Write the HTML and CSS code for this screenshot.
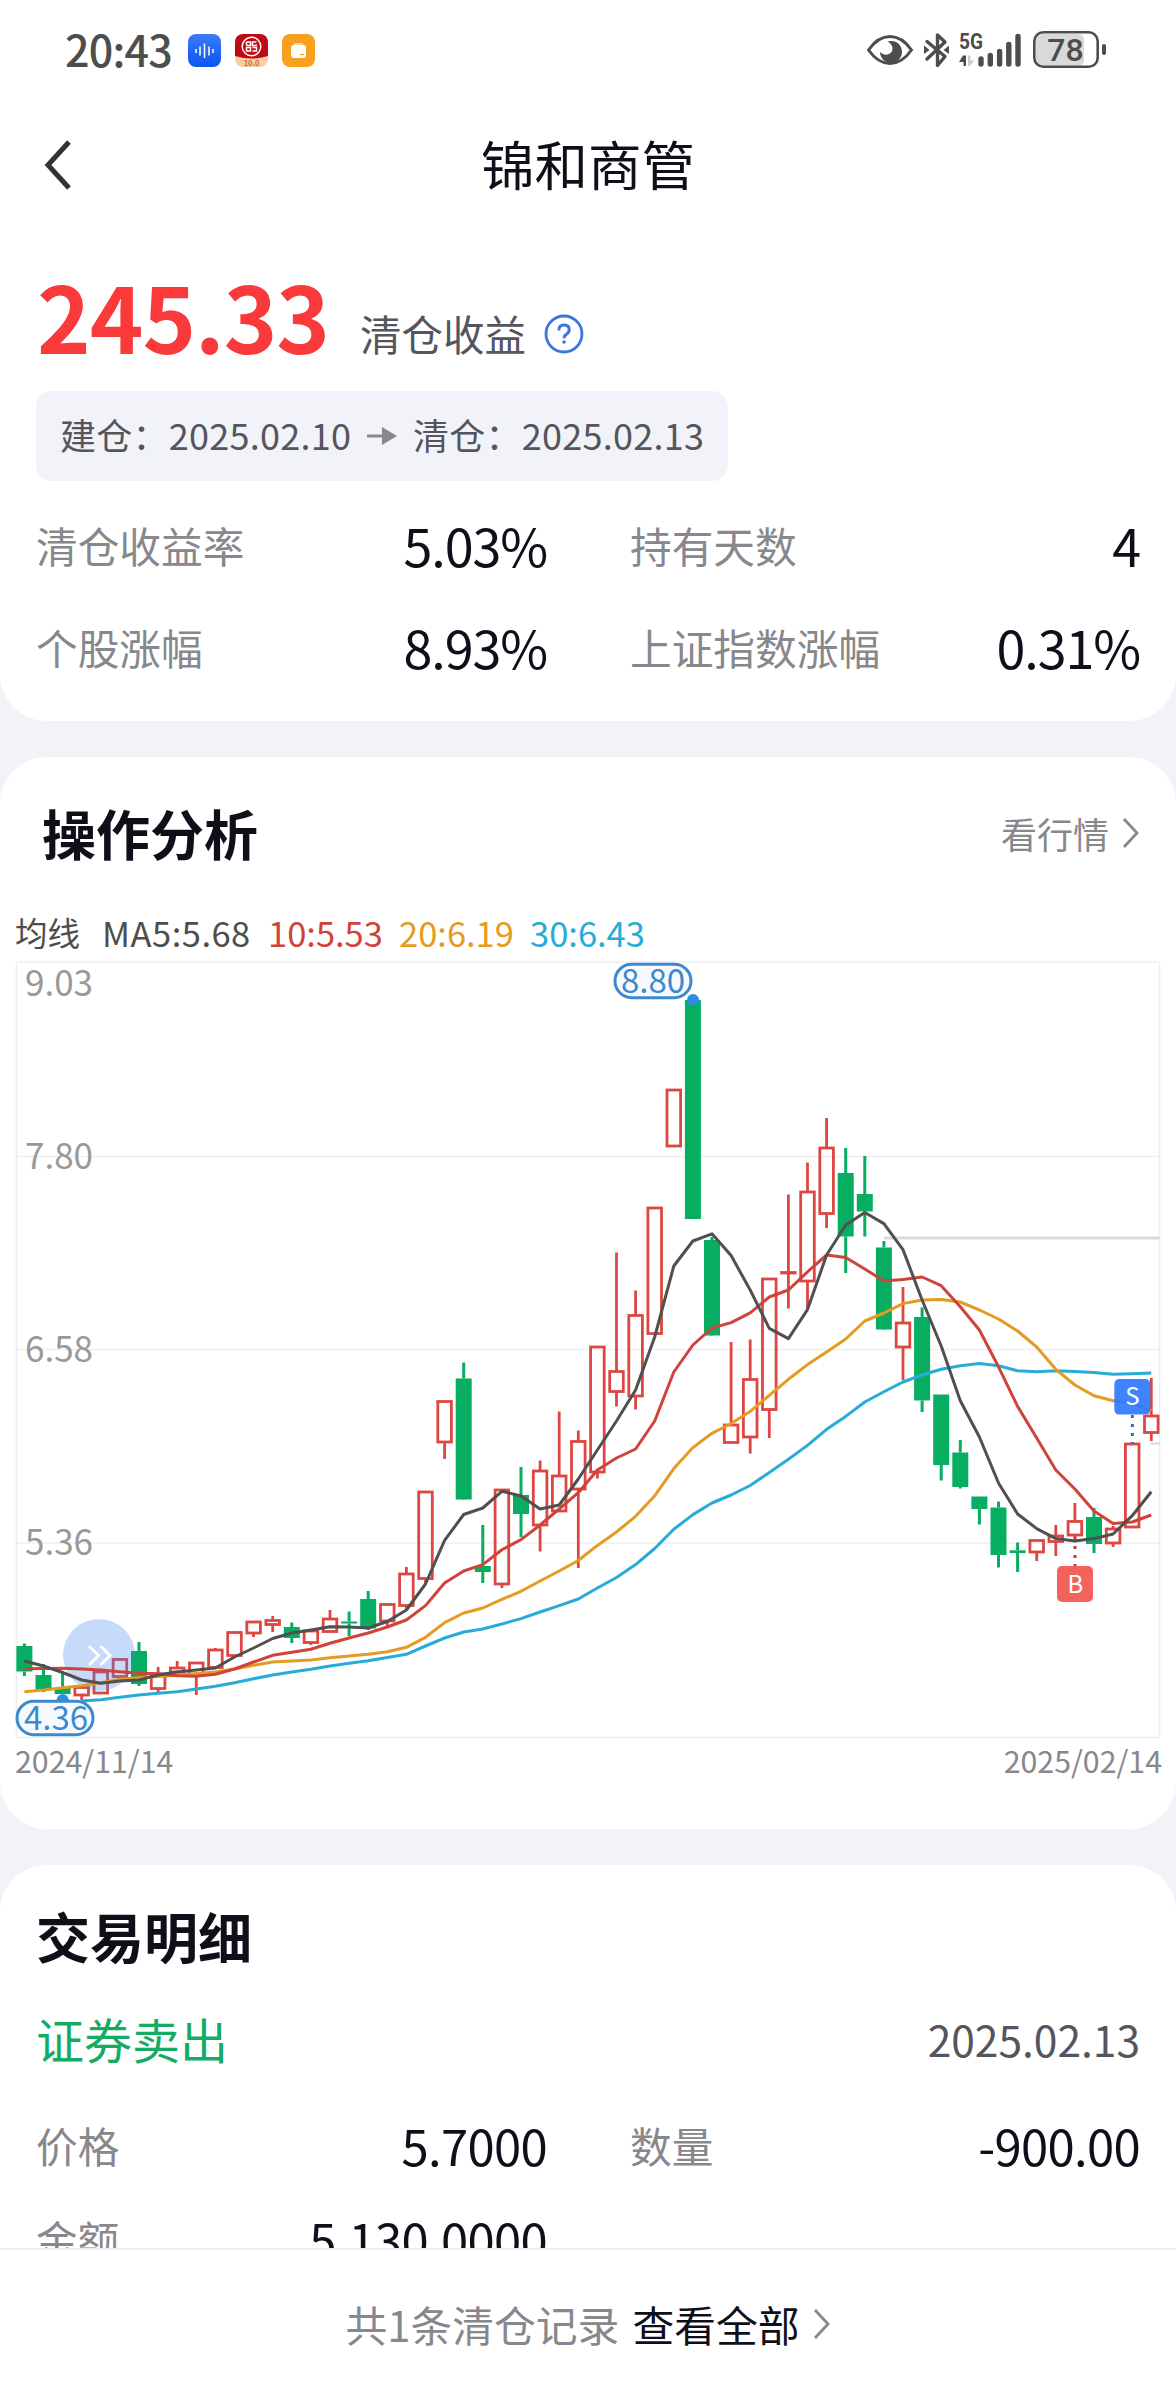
FILE: index.html
```
<!DOCTYPE html>
<html lang="zh-CN">
<head>
    <meta charset="UTF-8">
    <meta name="viewport" content="width=device-width, initial-scale=1.0">
    <title>锦和商管</title>
    <link rel="stylesheet" href="styles.css">
    <script src="main.js" defer></script>
</head>
<body>
    <section class="card card-top">
        <div class="status-bar">
            <span class="time">20:43</span>
            <svg class="app-icon" viewBox="0 0 33 33">
                <defs>
                    <linearGradient id="blue" x1="0" y1="0" x2="0" y2="1">
                        <stop offset="0" stop-color="#3c7cf8"/>
                        <stop offset="1" stop-color="#0b55f2"/>
                    </linearGradient>
                </defs>
                <rect width="33" height="33" rx="8" fill="url(#blue)"/>
                <path d="M8 15v4M12 12.500v9M16.500 9.500v14.500M21 12.500v9M25 15v4" stroke="#fff" stroke-width="1.500"/>
            </svg>
            <svg class="app-icon" viewBox="0 0 33 33">
                <rect width="33" height="33" rx="8" fill="#f8cf9f"/>
                <path d="M0 22V8a8 8 0 0 1 8-8h17a8 8 0 0 1 8 8v14q-16.500 5-33 0z" fill="#bd0a15"/>
                <circle cx="16.500" cy="12.500" r="9.300" fill="none" stroke="#fff" stroke-width="1.500"/>
                <path d="M11.500 8h4v3.500h-4M21.500 8h-4v3.500h4M11.500 17h4v-3.500h-4zM17.500 13.500h4V17h-4M11.500 8v3.500M21.500 11.500v-1" fill="none" stroke="#fff" stroke-width="1.500"/>
                <text x="16.500" y="31.500" class="app-badge">10.0</text>
            </svg>
            <svg class="app-icon" viewBox="0 0 33 33">
                <rect width="33" height="33" rx="8" fill="#f9a11f"/>
                <path d="M11 12q.5-3 3-3h5q2.500 0 3 3z" fill="#fdd9a0"/>
                <rect x="9" y="11" width="15" height="13" rx="3" fill="#fff"/>
                <path d="M18 20.500h4" stroke="#f9a11f" stroke-width="1.200"/>
            </svg>
            <svg class="system-icons" viewBox="0 0 242 44">
                <!-- eye -->
                <path d="M1.500 22Q11 8.500 23 8.500T44.500 22Q35 35.500 23 35.500T1.500 22z" fill="none" stroke="#4d4d4d" stroke-width="3"/>
                <path d="M20.500 13.500A11 11 0 1 1 13 24q4 4 9 2 5-3 3-8-1.500-3.500-4.500-4.500z" fill="#4d4d4d"/>
                <!-- bluetooth -->
                <path d="M60 13.500l18 15-7.500 9V7l7.500 7-18 17" fill="none" stroke="#4d4d4d" stroke-width="3.400" stroke-linejoin="round" stroke-linecap="round"/>
                <path d="M57 17.500l5.500 4.500-5.500 4zM82 17.500L76.500 22l5.500 4z" fill="#4d4d4d"/>
                <!-- signal -->
                <text x="92" y="21" class="net" textLength="24" lengthAdjust="spacingAndGlyphs">5G</text>
                <path d="M92 34l4-6.500h3V38h-2.500v-4z" fill="#4d4d4d"/>
                <path d="M101 27.500h2.500v5h4l-5 5.500H101z" fill="#ccc"/>
                <path d="M114 31v5M123.300 27.500V36M132.600 23.500V36M141.800 16.500V36M151 8.500V36" stroke="#4d4d4d" stroke-width="5.400" stroke-linecap="round"/>
                <!-- battery -->
                <rect x="169" y="6" width="48" height="32" rx="6" fill="#d9d9d9"/>
                <rect x="167.300" y="4.300" width="63.400" height="34.400" rx="9" fill="none" stroke="#4d4d4d" stroke-width="2.600"/>
                <path d="M237 18v7" stroke="#4d4d4d" stroke-width="4" stroke-linecap="round"/>
                <text x="198.500" y="33" class="battery-text">78</text>
            </svg>
        </div>

        <header class="nav">
            <svg class="back" viewBox="0 0 28 50"><path d="M25 2L4 25l21 23" fill="none" stroke="#333" stroke-width="5"/></svg>
            <h1>锦和商管</h1>
        </header>

        <div class="profit">
            <span class="profit-value">245.33</span>
            <span class="profit-label">清仓收益</span>
            <svg class="help" viewBox="0 0 40 40">
                <circle cx="20" cy="20" r="18" fill="none" stroke="#3b76df" stroke-width="2.800"/>
                <path d="M14.800 16.500q0-5.500 5.200-5.500t5.200 4.800q0 2.700-2.700 4.400-2.500 1.500-2.500 4" fill="none" stroke="#3b76df" stroke-width="3"/>
                <circle cx="20" cy="28" r="1.800" fill="#3b76df"/>
            </svg>
        </div>

        <div class="period">
            <span>建仓：2025.02.10</span>
            <svg class="arrow" viewBox="0 0 30 20"><path d="M0 8.500h15V1l15 9-15 9v-7.500H0z" fill="#87878c"/></svg>
            <span>清仓：2025.02.13</span>
        </div>

        <div class="stats">
            <div class="stat"><span>清仓收益率</span><b>5.03%</b></div>
            <div class="stat"><span>持有天数</span><b>4</b></div>
            <div class="stat"><span>个股涨幅</span><b>8.93%</b></div>
            <div class="stat"><span>上证指数涨幅</span><b>0.31%</b></div>
        </div>
    </section>

    <section class="card card-chart">
        <div class="card-head">
            <h2>操作分析</h2>
            <a class="more">看行情<svg class="chevron" viewBox="0 0 18 32"><path d="M2 2l13 14L2 30"/></svg></a>
        </div>
        <div class="legend">
            <span class="name">均线</span>
            <span class="ma5">MA5:5.68</span>
            <span class="ma10">10:5.53</span>
            <span class="ma20">20:6.19</span>
            <span class="ma30">30:6.43</span>
        </div>
        <svg class="chart" viewBox="0 0 1176 782">
            <path class="grid" d="M16.500 4H1159.500V779.500H16.500zM16.500 198.500H1159.500M16.500 391.500H1159.500M16.500 585H1159.500"/>
            <path d="M884 280H1159.500" stroke="#dadada" stroke-width="3"/>
            <path d="M1151 485.500h9" stroke="#dadada" stroke-width="2"/>
            <g class="axis">
                <text x="25" y="38">9.03</text>
                <text x="25" y="211">7.80</text>
                <text x="25" y="404">6.58</text>
                <text x="25" y="597">5.36</text>
            </g>
            <g id="candles"></g>
            <circle cx="99" cy="697" r="36" fill="#4285eb" fill-opacity="0.3"/>
            <path d="M89 688l9.500 9.500-9.500 9.500M100.500 688l9.500 9.500-9.500 9.500" fill="none" stroke="#fff" stroke-width="2.800"/>
            <g id="averages"></g>
            <circle cx="693" cy="42" r="6" fill="#2b8ee0"/>
            <circle cx="62.700" cy="742" r="6" fill="#2b8ee0"/>
            <g class="extreme">
                <rect x="615" y="6.200" width="76" height="33.500" rx="16.700"/>
                <text x="653" y="34.500">8.80</text>
                <rect x="17" y="743.200" width="76" height="33.500" rx="16.700"/>
                <text x="56" y="771.500">4.36</text>
            </g>
            <path d="M1132.400 457v29" stroke="#3a68c8" stroke-width="3" stroke-dasharray="3 6"/>
            <path d="M1075 579v29" stroke="#b8413c" stroke-width="3" stroke-dasharray="3 6"/>
            <g class="mark">
                <rect x="1114.300" y="421" width="36" height="35.600" rx="5" fill="#2f78ff" fill-opacity="0.92"/>
                <text x="1132.500" y="447">S</text>
                <rect x="1057" y="608" width="36" height="36" rx="5" fill="#f3635b"/>
                <text x="1075.500" y="634.500">B</text>
            </g>
        </svg>
        <div class="dates"><span>2024/11/14</span><span>2025/02/14</span></div>
    </section>

    <section class="card card-trades">
        <h2>交易明细</h2>
        <div class="trade-head"><span class="sell">证券卖出</span><span class="trade-date">2025.02.13</span></div>
        <div class="stats">
            <div class="stat"><span>价格</span><b>5.7000</b></div>
            <div class="stat"><span>数量</span><b>-900.00</b></div>
            <div class="stat"><span>金额</span><b>5,130.0000</b></div>
        </div>
    </section>

    <footer class="footer">
        <span>共1条清仓记录</span>
        <a>查看全部</a>
        <svg class="chevron" viewBox="0 0 18 32"><path d="M2 2l13 14L2 30"/></svg>
    </footer>
</body>
</html>
```
FILE: styles.css
```
:root {
    --page-bg: #f2f3f8;
    --text: #0f0f1a;
    --text-mid: #55555d;
    --text-light: #87878c;
    --red: #fa3a3a;
    --up: #dc4743;
    --down: #07ae61;
}

* {
    box-sizing: border-box;
}

body {
    margin: 0;
    width: 1176px;
    height: 2400px;
    overflow: hidden;
    display: flex;
    flex-direction: column;
    gap: 36px;
    background: var(--page-bg);
    color: var(--text);
    font-family: "Noto Sans CJK SC", sans-serif;
}

h1, h2 {
    margin: 0;
}

.card {
    background: #fff;
    border-radius: 47px;
    flex-shrink: 0;
}

.card-top {
    height: 721px;
    border-radius: 0 0 47px 47px;
}

/* status bar */
.status-bar {
    display: flex;
    align-items: center;
    height: 100px;
    padding: 0 67px 0 65px;
}

.time {
    width: 123px;
    font-size: 43px;
    line-height: 60px;
    font-weight: 500;
    letter-spacing: -0.8px;
    color: #4d4d4d;
    margin-top: -5px;
}

.app-icon {
    width: 33px;
    height: 33px;
    margin-right: 14px;
}

.app-badge {
    font-size: 7.5px;
    font-weight: 700;
    text-anchor: middle;
    fill: #d8604a;
}

.system-icons {
    width: 242px;
    height: 44px;
    margin-left: auto;
}

.net {
    font: 700 21.5px "Roboto", sans-serif;
    fill: #4d4d4d;
}

.battery-text {
    font: 500 32px "Roboto", sans-serif;
    text-anchor: middle;
    fill: #4d4d4d;
}

.nav {
    display: grid;
    grid-template-columns: 100px 1fr 100px;
    align-items: center;
    height: 130px;
    padding: 0 44px;
}

.back {
    width: 28px;
    height: 50px;
}

h1 {
    font-size: 53.5px;
    line-height: 70px;
    font-weight: 400;
    text-align: center;
    margin-top: -5px;
}

.profit {
    display: flex;
    align-items: baseline;
    height: 161px;
    padding-left: 37px;
}

.profit-value {
    width: 323px;
    font-size: 91px;
    line-height: 168px;
    font-weight: 700;
    letter-spacing: -1px;
    color: var(--red);
}

.profit-label {
    font-size: 41.5px;
    color: var(--text-mid);
    transform: translateY(-3px);
}

.help {
    width: 40px;
    height: 40px;
    margin-left: 18px;
    align-self: flex-start;
    margin-top: 84px;
}

.period {
    display: flex;
    align-items: center;
    gap: 16px;
    width: 692px;
    height: 90px;
    margin-left: 36px;
    padding: 0 0 4px 24px;
    border-radius: 16px;
    background: var(--page-bg);
    font-size: 36px;
    letter-spacing: 0.25px;
    color: var(--text-mid);
    white-space: nowrap;
}

.arrow {
    width: 30px;
    height: 20px;
    flex-shrink: 0;
    margin-top: 4px;
}

.stats {
    display: grid;
    grid-template-columns: 511px 510px;
    column-gap: 83px;
    grid-auto-rows: 102px;
    padding: 13px 36px 0;
}

.stat {
    display: flex;
    justify-content: space-between;
    align-items: center;
    line-height: 70px;
}

.stat span {
    font-size: 41.7px;
    color: var(--text-light);
}

.stat b {
    font-size: 52px;
    font-weight: 400;
    letter-spacing: -1.1px;
}

/* chart card */
.card-chart {
    height: 1072px;
}

.card-head {
    display: flex;
    justify-content: space-between;
    align-items: center;
    height: 152px;
    padding: 0 36px 0 42px;
}

h2 {
    font-size: 54px;
    line-height: 80px;
    font-weight: 700;
}

.more {
    display: flex;
    align-items: center;
    gap: 13px;
    font-size: 36px;
    line-height: 50px;
    color: var(--text-light);
}

.chevron {
    width: 18px;
    height: 32px;
    fill: none;
    stroke: var(--text-light);
    stroke-width: 2.8;
}

.legend {
    display: flex;
    align-items: center;
    height: 49px;
    padding: 0 0 3px 15px;
    font-size: 34.5px;
    line-height: 46px;
    color: #4d4d4d;
}

.legend span {
    width: 131px;
    white-space: nowrap;
}

.legend .name {
    width: 87px;
    font-size: 32.5px;
}

.legend .ma5 {
    width: 166px;
    letter-spacing: 0.5px;
}

.legend .ma10 {
    color: #d0433b;
}

.legend .ma20 {
    color: #e59b1f;
}

.legend .ma30 {
    color: #27acd8;
}

.chart {
    display: block;
    width: 1176px;
    height: 782px;
    overflow: visible;
}

.grid {
    fill: none;
    stroke: #efefef;
    stroke-width: 1.6;
}

.axis text {
    font-size: 35px;
    fill: #999;
}

.up {
    fill: none;
    stroke: var(--up);
    stroke-width: 2.8;
}

.down {
    fill: var(--down);
    stroke: var(--down);
    stroke-width: 3;
}

.down rect {
    stroke: none;
}

.line {
    fill: none;
    stroke-width: 3;
    stroke-linejoin: round;
}

.extreme rect {
    fill: #f6fafe;
    stroke: #3c8acd;
    stroke-width: 3;
}

.extreme text {
    font-size: 33px;
    text-anchor: middle;
    fill: #3c8acd;
}

.mark text {
    font-size: 24px;
    text-anchor: middle;
    fill: #fff;
}

.dates {
    display: flex;
    justify-content: space-between;
    padding: 0 14px 0 15px;
    font-size: 30.3px;
    line-height: 40px;
    color: var(--text-light);
}

/* trades */
.card-trades {
    height: 500px;
    padding-top: 31px;
}

.card-trades h2 {
    padding-left: 36px;
}

.trade-head {
    display: flex;
    justify-content: space-between;
    align-items: center;
    height: 120px;
    margin-top: 2px;
    padding: 0 36px;
}

.sell {
    font-size: 48px;
    color: #14ab65;
}

.trade-date {
    font-size: 42.5px;
    color: var(--text-mid);
}

.card-trades .stats {
    grid-auto-rows: 94px;
    padding-top: 0;
}

.card-trades .stat b {
    font-size: 49px;
    letter-spacing: -0.7px;
}

.footer {
    position: fixed;
    top: 2248px;
    left: 0;
    width: 1176px;
    height: 152px;
    display: flex;
    justify-content: center;
    align-items: center;
    gap: 13px;
    padding-bottom: 3px;
    border-top: 2px solid #ededf0;
    background: #fff;
    font-size: 41.8px;
    line-height: 60px;
    color: var(--text-light);
}

.footer a {
    color: var(--text);
}
```
FILE: main.js
```
const STEP = 19.1;
const FIRST_X = 24.4;
const TOP = 958;

// [direction, body top, body bottom, high, low]
const candles = [
    ['d', 1646, 1671.5, 1643.5, 1676], ['d', 1675, 1690.5, 1664, 1692], ['d', 1688, 1694, 1672.5, 1694],
    ['u', 1687.5, 1695, 1685, 1700], ['u', 1672, 1693, 1670, 1694], ['u', 1659.5, 1676.5, 1659, 1679],
    ['d', 1651, 1684, 1642, 1686], ['u', 1674, 1688.5, 1667, 1692], ['u', 1668, 1672, 1661, 1673],
    ['u', 1663, 1674, 1662, 1695], ['u', 1650, 1667.5, 1648, 1669], ['u', 1632.5, 1655.5, 1632, 1657],
    ['u', 1622, 1633, 1621, 1637], ['u', 1620.5, 1624.5, 1616, 1632], ['d', 1627, 1638, 1622.5, 1643],
    ['u', 1631, 1642.5, 1630, 1645], ['u', 1619, 1631.5, 1610, 1632], ['d', 1621.5, 1623.5, 1611.5, 1636],
    ['d', 1599, 1628.5, 1591, 1630], ['u', 1604.5, 1621, 1604, 1627], ['u', 1574, 1605.5, 1567, 1609],
    ['u', 1492, 1578.5, 1491, 1583], ['u', 1401.5, 1442, 1401, 1459], ['d', 1378.5, 1499.5, 1362.5, 1499],
    ['d', 1566, 1572, 1525, 1583], ['u', 1490, 1584, 1490, 1588], ['d', 1495, 1514, 1467, 1537],
    ['u', 1471, 1525, 1460.5, 1551.5], ['u', 1476, 1511, 1411.5, 1511], ['u', 1441.5, 1489, 1430.5, 1568],
    ['u', 1347, 1472, 1347, 1478.5], ['u', 1371.5, 1391.5, 1252.5, 1406.5], ['u', 1315.5, 1396, 1290.5, 1409.5],
    ['u', 1208, 1333.5, 1208, 1333], ['u', 1090, 1146, 1090, 1146], ['d', 1000, 1219, 1000, 1219],
    ['d', 1240, 1335.5, 1237, 1335], ['u', 1425, 1442.5, 1342, 1442], ['u', 1379.5, 1437, 1339.5, 1453.5],
    ['u', 1279, 1409.5, 1279, 1438], ['u', 1272.5, 1273, 1194.5, 1308.5], ['u', 1192, 1281, 1162.5, 1310],
    ['u', 1148, 1213.5, 1118, 1228], ['d', 1173, 1236.5, 1148, 1273], ['d', 1194, 1211.5, 1156, 1236.5],
    ['d', 1247.5, 1329.5, 1241, 1329], ['u', 1323, 1347, 1287, 1380], ['d', 1317, 1400.5, 1307.5, 1412],
    ['d', 1394.5, 1465, 1394.5, 1480.5], ['d', 1452.5, 1487, 1440, 1488.5], ['d', 1496.5, 1509, 1496.5, 1524.5],
    ['d', 1507.5, 1555, 1501.5, 1567.5], ['d', 1550.3, 1553, 1542.5, 1572], ['u', 1540.5, 1552, 1540, 1561],
    ['u', 1536, 1541.5, 1525, 1556], ['u', 1521.5, 1535, 1503, 1538], ['d', 1517, 1544, 1508, 1553],
    ['u', 1529, 1543, 1526, 1547], ['u', 1444, 1527, 1444, 1527], ['u', 1416, 1432.5, 1378, 1441]
];

// moving averages, one point per candle (null = no value)
const averages = [
    ['#27acd8', [null, null, null, 1701, 1699.7, 1697.3, 1695, 1693.3, 1691.7, 1689, 1686.3, 1682.7, 1678.7, 1675, 1672, 1669.3, 1666, 1663.3, 1660.7, 1657.5, 1654.3, 1646, 1638, 1632, 1629, 1624, 1618.6, 1612, 1605.6, 1599, 1588, 1577.5, 1564.6, 1548.5, 1529.3, 1514.6, 1503, 1495, 1485.5, 1472.6, 1459.3, 1445.4, 1429.3, 1416.4, 1402, 1391.8, 1382, 1375, 1369.3, 1365.7, 1363.6, 1365.7, 1370.7, 1371.8, 1370.7, 1371.5, 1372.5, 1374.3, 1373.7, 1373]],
    ['#e59b1f', [1691.7, 1690, 1687.7, 1685.7, 1682.7, 1679.3, 1677.7, 1676.5, 1675.3, 1673.7, 1672, 1669, 1665.3, 1662, 1661, 1660, 1657.7, 1656, 1654.3, 1651.7, 1647.3, 1637.3, 1622.6, 1613, 1608, 1599.4, 1591.3, 1581, 1571, 1560.5, 1545.4, 1532, 1516.3, 1495.8, 1468.6, 1447.6, 1433.3, 1423.5, 1411.4, 1395.4, 1379.3, 1364.6, 1352, 1339, 1321, 1313, 1303.6, 1300, 1299.6, 1302, 1310, 1319, 1331, 1347, 1369.3, 1385, 1395.7, 1400.7, 1403.6, 1410.4]],
    ['#d0433b', [1668.7, 1668.5, 1668.3, 1669, 1670, 1671.7, 1673.3, 1673.7, 1675.7, 1676.3, 1674.3, 1669, 1662, 1655.3, 1652.3, 1649.3, 1643.3, 1638, 1633, 1627, 1620, 1605.6, 1583, 1571, 1564.6, 1549.8, 1539.6, 1525, 1509, 1492.7, 1470, 1458, 1449, 1421, 1372, 1345, 1328, 1322.6, 1312.8, 1297, 1290, 1271.8, 1255, 1257.5, 1269, 1281, 1279.6, 1277, 1285.7, 1306.8, 1330, 1366.8, 1406.4, 1438, 1470, 1489, 1511, 1523.6, 1522, 1515]],
    ['#505050', [1661, 1666, 1672.5, 1680, 1683.3, 1681, 1680, 1675, 1672, 1670, 1668, 1657, 1648, 1638.5, 1633, 1630, 1626.7, 1627, 1628, 1621.5, 1610, 1584, 1540.4, 1514.5, 1508, 1491.3, 1496, 1509, 1505, 1479, 1450, 1421, 1390, 1337, 1266, 1241, 1233.8, 1255.6, 1290, 1328.4, 1338.6, 1309.6, 1255, 1225, 1212.5, 1223.6, 1249.6, 1300, 1346, 1400.7, 1437, 1483, 1514, 1528.6, 1538.6, 1541, 1538.6, 1534, 1515.7, 1491.8]]
];

const xAt = i => FIRST_X + i * STEP;
const yAt = y => y - TOP;

document.getElementById('candles').innerHTML = candles.map(([dir, top, bottom, high, low], i) => {
    const x = xAt(i);
    const up = dir === 'u';
    const w = up ? 13.6 : 16;
    return `<g class="${up ? 'up' : 'down'}">
        <path d="M${x} ${yAt(high)}V${yAt(top)}M${x} ${yAt(bottom)}V${yAt(low)}"/>
        <rect x="${x - w / 2}" y="${yAt(top)}" width="${w}" height="${bottom - top}"/>
    </g>`;
}).join('');

document.getElementById('averages').innerHTML = averages.map(([color, values]) => {
    const points = values.map((y, i) => y === null ? '' : `${xAt(i)},${yAt(y)}`).join(' ').trim();
    return `<polyline class="line" stroke="${color}" points="${points}"/>`;
}).join('');
```
